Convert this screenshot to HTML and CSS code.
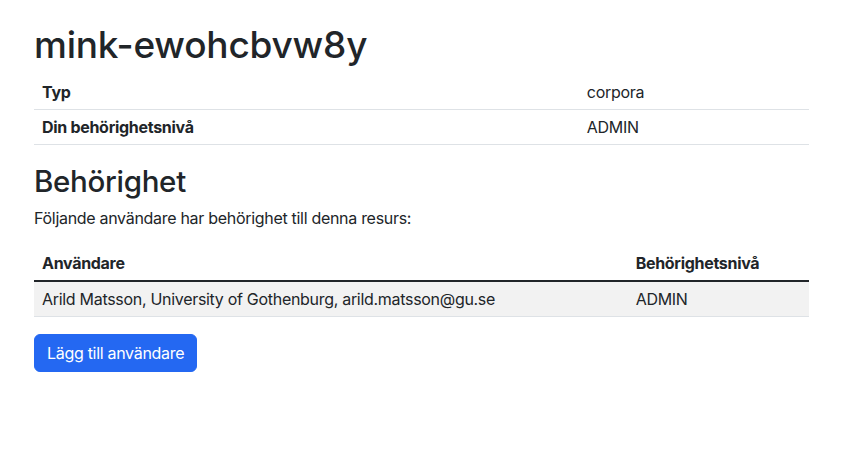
FILE: index.html
```html
<!DOCTYPE html>
<html lang="sv">
<head>
<meta charset="utf-8">
<title>mink-ewohcbvw8y</title>
<link rel="stylesheet" href="styles.css">
</head>
<body>
<main class="page">
  <h1 class="title">mink-ewohcbvw8y</h1>
  <table class="table info-table">
    <tbody>
      <tr><th class="col-label">Typ</th><td>corpora</td></tr>
      <tr><th class="col-label">Din behörighetsnivå</th><td>ADMIN</td></tr>
    </tbody>
  </table>
  <h2 class="subtitle">Behörighet</h2>
  <p class="lead-text">Följande användare har behörighet till denna resurs:</p>
  <table class="table users-table">
    <thead>
      <tr><th class="col-user">Användare</th><th>Behörighetsnivå</th></tr>
    </thead>
    <tbody class="striped">
      <tr><td>Arild Matsson, University of Gothenburg, arild.matsson@gu.se</td><td>ADMIN</td></tr>
    </tbody>
  </table>
  <button class="btn-primary" type="button">Lägg till användare</button>
</main>
</body>
</html>
```

FILE: styles.css
```css
* { box-sizing: border-box; }
html, body { margin: 0; padding: 0; background: #fff; }
body {
  font-family: Inter, "Liberation Sans", sans-serif;
  font-size: 16px;
  line-height: 1.5;
  letter-spacing: -0.3px;
  color: #212529;
}
.page {
  padding: 23px 32px 0 34px;
}
.title {
  font-size: 37px;
  font-weight: 500;
  line-height: 1.2;
  letter-spacing: -0.2px;
  margin: 0 0 8px;
}
.subtitle {
  font-size: 29.5px;
  font-weight: 500;
  line-height: 1.2;
  letter-spacing: -0.3px;
  margin: 0 0 6px;
}
.lead-text { margin: 0 0 16px; }
.table {
  width: 100%;
  border-collapse: collapse;
  margin-bottom: 19px;
}
.table th, .table td {
  text-align: left;
  padding: 5px 8px;
  border-bottom: 1px solid #dee2e6;
  vertical-align: top;
}
.table th { font-weight: 700; }
.info-table .col-label { width: 70.3%; }
.users-table { margin-bottom: 17px; }
.users-table .col-user { width: 76.6%; }
.users-table thead th { border-bottom: 2px solid #212529; }
.striped tr:nth-child(odd) td { background: #f2f2f2; }
.btn-primary {
  font: inherit;
  letter-spacing: -0.3px;
  color: #fff;
  background: #2468f2;
  border: 1px solid #2468f2;
  border-radius: 6px;
  padding: 6px 12px;
  line-height: 24px;
  height: 38px;
  cursor: pointer;
}
```
